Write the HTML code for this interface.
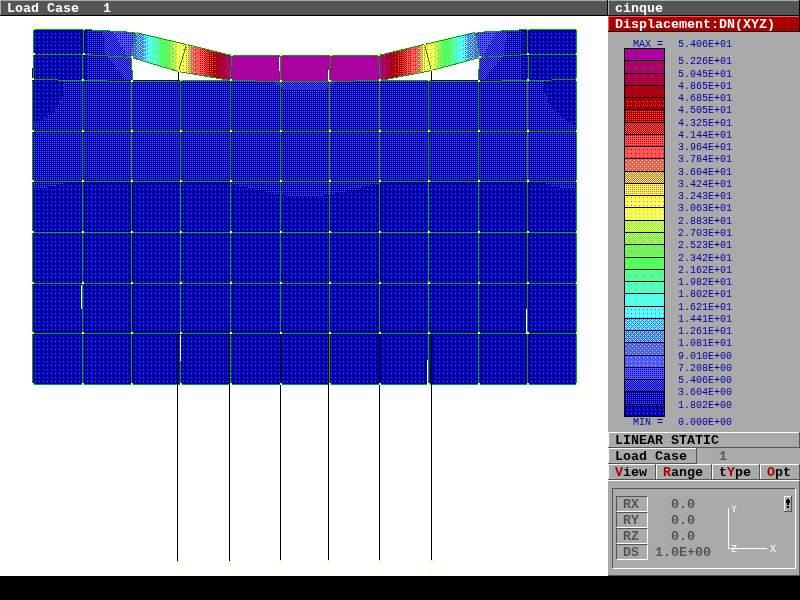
<!DOCTYPE html><html><head><meta charset="utf-8"><style>
*{margin:0;padding:0;box-sizing:border-box}
html,body{width:800px;height:600px;overflow:hidden;background:#fff}
.a{position:absolute}
.t{position:absolute;white-space:pre;font-family:"Liberation Mono",monospace;will-change:transform}
.tb{font-weight:bold;font-size:13.33px;line-height:14px;margin-left:-1px}
.tb i{font-style:normal}
.lg{font-size:10px;line-height:10px;color:#0000aa}
</style></head><body>

<div class="a" style="left:0;top:0;width:608px;height:16px;background:#000"></div>
<div class="a" style="left:0;top:0;width:607px;height:15px;background:#555;border-top:1px solid #aaa;border-left:1px solid #aaa"></div>
<div class="t tb" style="left:8px;top:2px;color:#fff">Load Case   1</div>
<div class="a" style="left:608px;top:0;width:192px;height:16px;background:#000"></div>
<div class="a" style="left:608px;top:0;width:191px;height:15px;background:#555;border-top:1px solid #aaa;border-left:1px solid #aaa"></div>
<div class="t tb" style="left:616px;top:2px;color:#fff">cinque</div>
<div class="a" style="left:608px;top:16px;width:192px;height:16px;background:#000"></div>
<div class="a" style="left:608px;top:16px;width:191px;height:15px;background:#aa0000;border-top:1px solid #ff5555;border-left:1px solid #ff5555"></div>
<div class="t tb" style="left:616px;top:18px;color:#fff">Displacement:DN(XYZ)</div>
<div class="a" style="left:608px;top:32px;width:192px;height:544px;background:#aaa"></div>
<div class="t lg" style="left:633px;top:40px">MAX =</div>
<div class="t lg" style="left:678px;top:40px">5.406E+01</div>
<svg class="a" style="left:624px;top:48px" width="41" height="369" shape-rendering="crispEdges"><defs><pattern id="lp1" patternUnits="userSpaceOnUse" x="0" y="0" width="4" height="4"><rect width="4" height="4" fill="#aa00aa"/><rect x="3" y="1" width="1" height="1" fill="#aa0000"/></pattern><pattern id="lp2" patternUnits="userSpaceOnUse" x="0" y="0" width="4" height="4"><rect width="4" height="4" fill="#aa00aa"/><rect x="2" y="0" width="1" height="1" fill="#aa0000"/><rect x="1" y="1" width="1" height="1" fill="#aa0000"/><rect x="3" y="1" width="1" height="1" fill="#aa0000"/><rect x="0" y="2" width="1" height="1" fill="#aa0000"/><rect x="1" y="3" width="1" height="1" fill="#aa0000"/><rect x="3" y="3" width="1" height="1" fill="#aa0000"/></pattern><pattern id="lp3" patternUnits="userSpaceOnUse" x="0" y="0" width="4" height="4"><rect width="4" height="4" fill="#aa0000"/><rect x="2" y="0" width="1" height="1" fill="#aa00aa"/><rect x="1" y="1" width="1" height="1" fill="#aa00aa"/><rect x="3" y="1" width="1" height="1" fill="#aa00aa"/><rect x="0" y="2" width="1" height="1" fill="#aa00aa"/><rect x="1" y="3" width="1" height="1" fill="#aa00aa"/><rect x="3" y="3" width="1" height="1" fill="#aa00aa"/></pattern><pattern id="lp4" patternUnits="userSpaceOnUse" x="0" y="0" width="4" height="4"><rect width="4" height="4" fill="#aa0000"/><rect x="2" y="0" width="1" height="1" fill="#aa00aa"/><rect x="0" y="2" width="1" height="1" fill="#aa00aa"/></pattern><pattern id="lp5" patternUnits="userSpaceOnUse" x="0" y="0" width="4" height="4"><rect width="4" height="4" fill="#aa0000"/><rect x="3" y="1" width="1" height="1" fill="#ff5555"/></pattern><pattern id="lp6" patternUnits="userSpaceOnUse" x="0" y="0" width="4" height="4"><rect width="4" height="4" fill="#aa0000"/><rect x="0" y="1" width="1" height="1" fill="#ff5555"/><rect x="2" y="1" width="1" height="1" fill="#ff5555"/><rect x="0" y="3" width="1" height="1" fill="#ff5555"/><rect x="2" y="3" width="1" height="1" fill="#ff5555"/></pattern><pattern id="lp7" patternUnits="userSpaceOnUse" x="0" y="0" width="4" height="4"><rect width="4" height="4" fill="#aa0000"/><rect x="0" y="0" width="1" height="1" fill="#ff5555"/><rect x="2" y="0" width="1" height="1" fill="#ff5555"/><rect x="1" y="1" width="1" height="1" fill="#ff5555"/><rect x="3" y="1" width="1" height="1" fill="#ff5555"/><rect x="0" y="2" width="1" height="1" fill="#ff5555"/><rect x="2" y="2" width="1" height="1" fill="#ff5555"/><rect x="1" y="3" width="1" height="1" fill="#ff5555"/><rect x="3" y="3" width="1" height="1" fill="#ff5555"/></pattern><pattern id="lp8" patternUnits="userSpaceOnUse" x="0" y="0" width="4" height="4"><rect width="4" height="4" fill="#ff5555"/><rect x="0" y="1" width="1" height="1" fill="#aa0000"/><rect x="2" y="1" width="1" height="1" fill="#aa0000"/><rect x="0" y="3" width="1" height="1" fill="#aa0000"/><rect x="2" y="3" width="1" height="1" fill="#aa0000"/></pattern><pattern id="lp9" patternUnits="userSpaceOnUse" x="0" y="0" width="4" height="4"><rect width="4" height="4" fill="#ff5555"/><rect x="3" y="1" width="1" height="1" fill="#aa0000"/></pattern><pattern id="lp10" patternUnits="userSpaceOnUse" x="0" y="0" width="4" height="4"><rect width="4" height="4" fill="#ff5555"/><rect x="2" y="0" width="1" height="1" fill="#ffff55"/><rect x="0" y="2" width="1" height="1" fill="#ffff55"/></pattern><pattern id="lp11" patternUnits="userSpaceOnUse" x="0" y="0" width="4" height="4"><rect width="4" height="4" fill="#ff5555"/><rect x="0" y="0" width="1" height="1" fill="#ffff55"/><rect x="2" y="0" width="1" height="1" fill="#ffff55"/><rect x="1" y="1" width="1" height="1" fill="#ffff55"/><rect x="3" y="1" width="1" height="1" fill="#ffff55"/><rect x="0" y="2" width="1" height="1" fill="#ffff55"/><rect x="2" y="2" width="1" height="1" fill="#ffff55"/><rect x="1" y="3" width="1" height="1" fill="#ffff55"/><rect x="3" y="3" width="1" height="1" fill="#ffff55"/></pattern><pattern id="lp12" patternUnits="userSpaceOnUse" x="0" y="0" width="4" height="4"><rect width="4" height="4" fill="#ffff55"/><rect x="0" y="1" width="1" height="1" fill="#ff5555"/><rect x="2" y="1" width="1" height="1" fill="#ff5555"/><rect x="0" y="3" width="1" height="1" fill="#ff5555"/><rect x="2" y="3" width="1" height="1" fill="#ff5555"/></pattern><pattern id="lp13" patternUnits="userSpaceOnUse" x="0" y="0" width="4" height="4"><rect width="4" height="4" fill="#ffff55"/><rect x="3" y="1" width="1" height="1" fill="#ff5555"/></pattern><pattern id="lp14" patternUnits="userSpaceOnUse" x="0" y="0" width="4" height="4"><rect width="4" height="4" fill="#ffff55"/><rect x="3" y="1" width="1" height="1" fill="#55ff55"/></pattern><pattern id="lp15" patternUnits="userSpaceOnUse" x="0" y="0" width="4" height="4"><rect width="4" height="4" fill="#ffff55"/><rect x="2" y="0" width="1" height="1" fill="#55ff55"/><rect x="1" y="1" width="1" height="1" fill="#55ff55"/><rect x="3" y="1" width="1" height="1" fill="#55ff55"/><rect x="0" y="2" width="1" height="1" fill="#55ff55"/><rect x="1" y="3" width="1" height="1" fill="#55ff55"/><rect x="3" y="3" width="1" height="1" fill="#55ff55"/></pattern><pattern id="lp16" patternUnits="userSpaceOnUse" x="0" y="0" width="4" height="4"><rect width="4" height="4" fill="#55ff55"/><rect x="2" y="0" width="1" height="1" fill="#ffff55"/><rect x="1" y="1" width="1" height="1" fill="#ffff55"/><rect x="3" y="1" width="1" height="1" fill="#ffff55"/><rect x="0" y="2" width="1" height="1" fill="#ffff55"/><rect x="1" y="3" width="1" height="1" fill="#ffff55"/><rect x="3" y="3" width="1" height="1" fill="#ffff55"/></pattern><pattern id="lp17" patternUnits="userSpaceOnUse" x="0" y="0" width="4" height="4"><rect width="4" height="4" fill="#55ff55"/><rect x="2" y="0" width="1" height="1" fill="#ffff55"/><rect x="0" y="2" width="1" height="1" fill="#ffff55"/></pattern><pattern id="lp18" patternUnits="userSpaceOnUse" x="0" y="0" width="4" height="4"><rect width="4" height="4" fill="#55ff55"/><rect x="3" y="1" width="1" height="1" fill="#55ffff"/></pattern><pattern id="lp19" patternUnits="userSpaceOnUse" x="0" y="0" width="4" height="4"><rect width="4" height="4" fill="#55ff55"/><rect x="2" y="0" width="1" height="1" fill="#55ffff"/><rect x="1" y="1" width="1" height="1" fill="#55ffff"/><rect x="3" y="1" width="1" height="1" fill="#55ffff"/><rect x="0" y="2" width="1" height="1" fill="#55ffff"/><rect x="1" y="3" width="1" height="1" fill="#55ffff"/><rect x="3" y="3" width="1" height="1" fill="#55ffff"/></pattern><pattern id="lp20" patternUnits="userSpaceOnUse" x="0" y="0" width="4" height="4"><rect width="4" height="4" fill="#55ffff"/><rect x="2" y="0" width="1" height="1" fill="#55ff55"/><rect x="1" y="1" width="1" height="1" fill="#55ff55"/><rect x="3" y="1" width="1" height="1" fill="#55ff55"/><rect x="0" y="2" width="1" height="1" fill="#55ff55"/><rect x="1" y="3" width="1" height="1" fill="#55ff55"/><rect x="3" y="3" width="1" height="1" fill="#55ff55"/></pattern><pattern id="lp21" patternUnits="userSpaceOnUse" x="0" y="0" width="4" height="4"><rect width="4" height="4" fill="#55ffff"/><rect x="2" y="0" width="1" height="1" fill="#55ff55"/><rect x="0" y="2" width="1" height="1" fill="#55ff55"/></pattern><pattern id="lp22" patternUnits="userSpaceOnUse" x="0" y="0" width="4" height="4"><rect width="4" height="4" fill="#55ffff"/><rect x="3" y="1" width="1" height="1" fill="#5555ff"/></pattern><pattern id="lp23" patternUnits="userSpaceOnUse" x="0" y="0" width="4" height="4"><rect width="4" height="4" fill="#55ffff"/><rect x="2" y="0" width="1" height="1" fill="#5555ff"/><rect x="1" y="1" width="1" height="1" fill="#5555ff"/><rect x="3" y="1" width="1" height="1" fill="#5555ff"/><rect x="0" y="2" width="1" height="1" fill="#5555ff"/><rect x="1" y="3" width="1" height="1" fill="#5555ff"/><rect x="3" y="3" width="1" height="1" fill="#5555ff"/></pattern><pattern id="lp24" patternUnits="userSpaceOnUse" x="0" y="0" width="4" height="4"><rect width="4" height="4" fill="#5555ff"/><rect x="2" y="0" width="1" height="1" fill="#55ffff"/><rect x="1" y="1" width="1" height="1" fill="#55ffff"/><rect x="3" y="1" width="1" height="1" fill="#55ffff"/><rect x="0" y="2" width="1" height="1" fill="#55ffff"/><rect x="1" y="3" width="1" height="1" fill="#55ffff"/><rect x="3" y="3" width="1" height="1" fill="#55ffff"/></pattern><pattern id="lp25" patternUnits="userSpaceOnUse" x="0" y="0" width="4" height="4"><rect width="4" height="4" fill="#5555ff"/><rect x="2" y="0" width="1" height="1" fill="#55ffff"/><rect x="0" y="2" width="1" height="1" fill="#55ffff"/></pattern><pattern id="lp26" patternUnits="userSpaceOnUse" x="0" y="0" width="4" height="4"><rect width="4" height="4" fill="#5555ff"/><rect x="3" y="1" width="1" height="1" fill="#55ffff"/></pattern><pattern id="lp27" patternUnits="userSpaceOnUse" x="0" y="0" width="4" height="4"><rect width="4" height="4" fill="#5555ff"/><rect x="0" y="1" width="1" height="1" fill="#0000aa"/><rect x="2" y="1" width="1" height="1" fill="#0000aa"/><rect x="0" y="3" width="1" height="1" fill="#0000aa"/><rect x="2" y="3" width="1" height="1" fill="#0000aa"/></pattern><pattern id="lp28" patternUnits="userSpaceOnUse" x="0" y="0" width="4" height="4"><rect width="4" height="4" fill="#5555ff"/><rect x="0" y="0" width="1" height="1" fill="#0000aa"/><rect x="2" y="0" width="1" height="1" fill="#0000aa"/><rect x="1" y="1" width="1" height="1" fill="#0000aa"/><rect x="3" y="1" width="1" height="1" fill="#0000aa"/><rect x="0" y="2" width="1" height="1" fill="#0000aa"/><rect x="2" y="2" width="1" height="1" fill="#0000aa"/><rect x="1" y="3" width="1" height="1" fill="#0000aa"/><rect x="3" y="3" width="1" height="1" fill="#0000aa"/></pattern><pattern id="lp29" patternUnits="userSpaceOnUse" x="0" y="0" width="4" height="4"><rect width="4" height="4" fill="#0000aa"/><rect x="0" y="1" width="1" height="1" fill="#5555ff"/><rect x="2" y="1" width="1" height="1" fill="#5555ff"/><rect x="0" y="3" width="1" height="1" fill="#5555ff"/><rect x="2" y="3" width="1" height="1" fill="#5555ff"/></pattern><pattern id="lp30" patternUnits="userSpaceOnUse" x="0" y="0" width="4" height="4"><rect width="4" height="4" fill="#0000aa"/><rect x="3" y="1" width="1" height="1" fill="#5555ff"/></pattern></defs><rect width="41" height="369" fill="#000"/><rect x="1" y="1" width="39" height="11" fill="url(#lp1)"/><rect x="1" y="13" width="39" height="12" fill="url(#lp2)"/><rect x="1" y="26" width="39" height="11" fill="url(#lp3)"/><rect x="1" y="38" width="39" height="11" fill="url(#lp4)"/><rect x="1" y="50" width="39" height="11" fill="url(#lp5)"/><rect x="1" y="62" width="39" height="12" fill="url(#lp6)"/><rect x="1" y="75" width="39" height="11" fill="url(#lp7)"/><rect x="1" y="87" width="39" height="11" fill="url(#lp8)"/><rect x="1" y="99" width="39" height="11" fill="url(#lp9)"/><rect x="1" y="111" width="39" height="12" fill="url(#lp10)"/><rect x="1" y="124" width="39" height="11" fill="url(#lp11)"/><rect x="1" y="136" width="39" height="11" fill="url(#lp12)"/><rect x="1" y="148" width="39" height="11" fill="url(#lp13)"/><rect x="1" y="160" width="39" height="12" fill="url(#lp14)"/><rect x="1" y="173" width="39" height="11" fill="url(#lp15)"/><rect x="1" y="185" width="39" height="11" fill="url(#lp16)"/><rect x="1" y="197" width="39" height="12" fill="url(#lp17)"/><rect x="1" y="210" width="39" height="11" fill="url(#lp18)"/><rect x="1" y="222" width="39" height="11" fill="url(#lp19)"/><rect x="1" y="234" width="39" height="11" fill="url(#lp20)"/><rect x="1" y="246" width="39" height="12" fill="url(#lp21)"/><rect x="1" y="259" width="39" height="11" fill="url(#lp22)"/><rect x="1" y="271" width="39" height="11" fill="url(#lp23)"/><rect x="1" y="283" width="39" height="11" fill="url(#lp24)"/><rect x="1" y="295" width="39" height="12" fill="url(#lp25)"/><rect x="1" y="308" width="39" height="11" fill="url(#lp26)"/><rect x="1" y="320" width="39" height="11" fill="url(#lp27)"/><rect x="1" y="332" width="39" height="11" fill="url(#lp28)"/><rect x="1" y="344" width="39" height="12" fill="url(#lp29)"/><rect x="1" y="357" width="39" height="11" fill="url(#lp30)"/></svg>
<div class="t lg" style="left:678px;top:57px">5.226E+01</div>
<div class="t lg" style="left:678px;top:70px">5.045E+01</div>
<div class="t lg" style="left:678px;top:82px">4.865E+01</div>
<div class="t lg" style="left:678px;top:94px">4.685E+01</div>
<div class="t lg" style="left:678px;top:106px">4.505E+01</div>
<div class="t lg" style="left:678px;top:119px">4.325E+01</div>
<div class="t lg" style="left:678px;top:131px">4.144E+01</div>
<div class="t lg" style="left:678px;top:143px">3.964E+01</div>
<div class="t lg" style="left:678px;top:155px">3.784E+01</div>
<div class="t lg" style="left:678px;top:168px">3.604E+01</div>
<div class="t lg" style="left:678px;top:180px">3.424E+01</div>
<div class="t lg" style="left:678px;top:192px">3.243E+01</div>
<div class="t lg" style="left:678px;top:204px">3.063E+01</div>
<div class="t lg" style="left:678px;top:217px">2.883E+01</div>
<div class="t lg" style="left:678px;top:229px">2.703E+01</div>
<div class="t lg" style="left:678px;top:241px">2.523E+01</div>
<div class="t lg" style="left:678px;top:254px">2.342E+01</div>
<div class="t lg" style="left:678px;top:266px">2.162E+01</div>
<div class="t lg" style="left:678px;top:278px">1.982E+01</div>
<div class="t lg" style="left:678px;top:290px">1.802E+01</div>
<div class="t lg" style="left:678px;top:303px">1.621E+01</div>
<div class="t lg" style="left:678px;top:315px">1.441E+01</div>
<div class="t lg" style="left:678px;top:327px">1.261E+01</div>
<div class="t lg" style="left:678px;top:339px">1.081E+01</div>
<div class="t lg" style="left:678px;top:352px">9.010E+00</div>
<div class="t lg" style="left:678px;top:364px">7.208E+00</div>
<div class="t lg" style="left:678px;top:376px">5.406E+00</div>
<div class="t lg" style="left:678px;top:388px">3.604E+00</div>
<div class="t lg" style="left:678px;top:401px">1.802E+00</div>
<div class="t lg" style="left:633px;top:418px">MIN =</div>
<div class="t lg" style="left:678px;top:418px">0.000E+00</div>
<div class="a" style="left:608px;top:432px;width:192px;height:16px;background:#555"></div>
<div class="a" style="left:608px;top:432px;width:191px;height:15px;background:#fff"></div>
<div class="a" style="left:609px;top:433px;width:190px;height:14px;background:#aaa"></div>
<div class="t tb" style="left:616px;top:434px;color:#000">LINEAR STATIC</div>
<div class="a" style="left:608px;top:448px;width:89px;height:16px;background:#555"></div>
<div class="a" style="left:608px;top:448px;width:88px;height:15px;background:#fff"></div>
<div class="a" style="left:609px;top:449px;width:87px;height:14px;background:#aaa"></div>
<div class="a" style="left:696px;top:448px;width:1px;height:16px;background:#555"></div>
<div class="t tb" style="left:616px;top:450px;color:#000">Load Case</div>
<div class="a" style="left:697px;top:448px;width:103px;height:16px;background:#aaa"></div>
<div class="t tb" style="left:720px;top:450px;color:#555">1</div>
<div class="a" style="left:608px;top:464px;width:48px;height:16px;background:#555"></div>
<div class="a" style="left:608px;top:464px;width:47px;height:15px;background:#fff"></div>
<div class="a" style="left:609px;top:465px;width:46px;height:14px;background:#aaa"></div>
<div class="a" style="left:656px;top:464px;width:56px;height:16px;background:#555"></div>
<div class="a" style="left:656px;top:464px;width:55px;height:15px;background:#fff"></div>
<div class="a" style="left:657px;top:465px;width:54px;height:14px;background:#aaa"></div>
<div class="a" style="left:712px;top:464px;width:48px;height:16px;background:#555"></div>
<div class="a" style="left:712px;top:464px;width:47px;height:15px;background:#fff"></div>
<div class="a" style="left:713px;top:465px;width:46px;height:14px;background:#aaa"></div>
<div class="a" style="left:760px;top:464px;width:40px;height:16px;background:#555"></div>
<div class="a" style="left:760px;top:464px;width:39px;height:15px;background:#fff"></div>
<div class="a" style="left:761px;top:465px;width:38px;height:14px;background:#aaa"></div>
<div class="t tb" style="left:616px;top:466px;color:#000"><span style="color:#aa0000">V</span>iew</div>
<div class="t tb" style="left:664px;top:466px;color:#000"><span style="color:#aa0000">R</span>ange</div>
<div class="t tb" style="left:720px;top:466px;color:#000">t<span style="color:#aa0000">Y</span>pe</div>
<div class="t tb" style="left:768px;top:466px;color:#000"><span style="color:#aa0000">O</span>pt</div>
<div class="a" style="left:608px;top:480px;width:192px;height:96px;background:#aaa;border-top:1px solid #fff;border-right:1px solid #555;border-bottom:1px solid #555"></div>
<div class="a" style="left:612px;top:488px;width:184px;height:81px;border-top:1px solid #555;border-left:1px solid #555;border-bottom:1px solid #fff;border-right:1px solid #fff"></div>
<div class="a" style="left:616px;top:496px;width:32px;height:16px;border-top:1px solid #555;border-left:1px solid #555;border-bottom:1px solid #fff;border-right:1px solid #fff"></div>
<div class="t tb" style="left:624px;top:498px;color:#555">RX</div>
<div class="t tb" style="left:672px;top:498px;color:#555">0.0</div>
<div class="a" style="left:616px;top:512px;width:32px;height:16px;border-top:1px solid #555;border-left:1px solid #555;border-bottom:1px solid #fff;border-right:1px solid #fff"></div>
<div class="t tb" style="left:624px;top:514px;color:#555">RY</div>
<div class="t tb" style="left:672px;top:514px;color:#555">0.0</div>
<div class="a" style="left:616px;top:528px;width:32px;height:16px;border-top:1px solid #555;border-left:1px solid #555;border-bottom:1px solid #fff;border-right:1px solid #fff"></div>
<div class="t tb" style="left:624px;top:530px;color:#555">RZ</div>
<div class="t tb" style="left:672px;top:530px;color:#555">0.0</div>
<div class="a" style="left:616px;top:544px;width:32px;height:16px;border-top:1px solid #555;border-left:1px solid #555;border-bottom:1px solid #fff;border-right:1px solid #fff"></div>
<div class="t tb" style="left:624px;top:546px;color:#555">DS</div>
<div class="t tb" style="left:656px;top:546px;color:#555">1.0E+00</div>
<svg class="a" style="left:700px;top:490px" width="100" height="80"><g stroke="#fff" fill="none" stroke-width="1"><path d="M28.5 18V58.5H67"/></g></svg>
<div class="t lg" style="left:731px;top:505px;color:#fff">Y</div>
<div class="t lg" style="left:731px;top:545px;color:#fff">Z</div>
<div class="t lg" style="left:770px;top:545px;color:#fff">X</div>
<div class="a" style="left:784px;top:496px;width:8px;height:16px;background:#555"></div>
<div class="a" style="left:784px;top:496px;width:7px;height:15px;background:#fff"></div>
<div class="a" style="left:785px;top:497px;width:6px;height:14px;background:#aaa"></div>
<svg class="a" style="left:784px;top:496px" width="8" height="16" shape-rendering="crispEdges"><g fill="#000"><rect x="3" y="3" width="2" height="1"/><rect x="2" y="4" width="4" height="3"/><rect x="3" y="7" width="2" height="2"/><rect x="3" y="10" width="2" height="2"/></g></svg>
<div class="a" style="left:0;top:576px;width:800px;height:24px;background:#000"></div>
<svg class="a" style="left:0;top:0" width="608" height="575" shape-rendering="crispEdges"><defs><pattern id="mp1" patternUnits="userSpaceOnUse" x="0" y="0" width="4" height="4"><rect width="4" height="4" fill="#aa00aa"/><rect x="3" y="1" width="1" height="1" fill="#aa0000"/></pattern><pattern id="mp2" patternUnits="userSpaceOnUse" x="0" y="0" width="4" height="4"><rect width="4" height="4" fill="#aa00aa"/><rect x="2" y="0" width="1" height="1" fill="#aa0000"/><rect x="1" y="1" width="1" height="1" fill="#aa0000"/><rect x="3" y="1" width="1" height="1" fill="#aa0000"/><rect x="0" y="2" width="1" height="1" fill="#aa0000"/><rect x="1" y="3" width="1" height="1" fill="#aa0000"/><rect x="3" y="3" width="1" height="1" fill="#aa0000"/></pattern><pattern id="mp3" patternUnits="userSpaceOnUse" x="0" y="0" width="4" height="4"><rect width="4" height="4" fill="#aa0000"/><rect x="2" y="0" width="1" height="1" fill="#aa00aa"/><rect x="1" y="1" width="1" height="1" fill="#aa00aa"/><rect x="3" y="1" width="1" height="1" fill="#aa00aa"/><rect x="0" y="2" width="1" height="1" fill="#aa00aa"/><rect x="1" y="3" width="1" height="1" fill="#aa00aa"/><rect x="3" y="3" width="1" height="1" fill="#aa00aa"/></pattern><pattern id="mp4" patternUnits="userSpaceOnUse" x="0" y="0" width="4" height="4"><rect width="4" height="4" fill="#aa0000"/><rect x="2" y="0" width="1" height="1" fill="#aa00aa"/><rect x="0" y="2" width="1" height="1" fill="#aa00aa"/></pattern><pattern id="mp5" patternUnits="userSpaceOnUse" x="0" y="0" width="4" height="4"><rect width="4" height="4" fill="#aa0000"/><rect x="3" y="1" width="1" height="1" fill="#ff5555"/></pattern><pattern id="mp6" patternUnits="userSpaceOnUse" x="0" y="0" width="4" height="4"><rect width="4" height="4" fill="#aa0000"/><rect x="0" y="1" width="1" height="1" fill="#ff5555"/><rect x="2" y="1" width="1" height="1" fill="#ff5555"/><rect x="0" y="3" width="1" height="1" fill="#ff5555"/><rect x="2" y="3" width="1" height="1" fill="#ff5555"/></pattern><pattern id="mp7" patternUnits="userSpaceOnUse" x="0" y="0" width="4" height="4"><rect width="4" height="4" fill="#aa0000"/><rect x="0" y="0" width="1" height="1" fill="#ff5555"/><rect x="2" y="0" width="1" height="1" fill="#ff5555"/><rect x="1" y="1" width="1" height="1" fill="#ff5555"/><rect x="3" y="1" width="1" height="1" fill="#ff5555"/><rect x="0" y="2" width="1" height="1" fill="#ff5555"/><rect x="2" y="2" width="1" height="1" fill="#ff5555"/><rect x="1" y="3" width="1" height="1" fill="#ff5555"/><rect x="3" y="3" width="1" height="1" fill="#ff5555"/></pattern><pattern id="mp8" patternUnits="userSpaceOnUse" x="0" y="0" width="4" height="4"><rect width="4" height="4" fill="#ff5555"/><rect x="0" y="1" width="1" height="1" fill="#aa0000"/><rect x="2" y="1" width="1" height="1" fill="#aa0000"/><rect x="0" y="3" width="1" height="1" fill="#aa0000"/><rect x="2" y="3" width="1" height="1" fill="#aa0000"/></pattern><pattern id="mp9" patternUnits="userSpaceOnUse" x="0" y="0" width="4" height="4"><rect width="4" height="4" fill="#ff5555"/><rect x="3" y="1" width="1" height="1" fill="#aa0000"/></pattern><pattern id="mp10" patternUnits="userSpaceOnUse" x="0" y="0" width="4" height="4"><rect width="4" height="4" fill="#ff5555"/><rect x="2" y="0" width="1" height="1" fill="#ffff55"/><rect x="0" y="2" width="1" height="1" fill="#ffff55"/></pattern><pattern id="mp11" patternUnits="userSpaceOnUse" x="0" y="0" width="4" height="4"><rect width="4" height="4" fill="#ff5555"/><rect x="0" y="0" width="1" height="1" fill="#ffff55"/><rect x="2" y="0" width="1" height="1" fill="#ffff55"/><rect x="1" y="1" width="1" height="1" fill="#ffff55"/><rect x="3" y="1" width="1" height="1" fill="#ffff55"/><rect x="0" y="2" width="1" height="1" fill="#ffff55"/><rect x="2" y="2" width="1" height="1" fill="#ffff55"/><rect x="1" y="3" width="1" height="1" fill="#ffff55"/><rect x="3" y="3" width="1" height="1" fill="#ffff55"/></pattern><pattern id="mp12" patternUnits="userSpaceOnUse" x="0" y="0" width="4" height="4"><rect width="4" height="4" fill="#ffff55"/><rect x="0" y="1" width="1" height="1" fill="#ff5555"/><rect x="2" y="1" width="1" height="1" fill="#ff5555"/><rect x="0" y="3" width="1" height="1" fill="#ff5555"/><rect x="2" y="3" width="1" height="1" fill="#ff5555"/></pattern><pattern id="mp13" patternUnits="userSpaceOnUse" x="0" y="0" width="4" height="4"><rect width="4" height="4" fill="#ffff55"/><rect x="3" y="1" width="1" height="1" fill="#ff5555"/></pattern><pattern id="mp14" patternUnits="userSpaceOnUse" x="0" y="0" width="4" height="4"><rect width="4" height="4" fill="#ffff55"/><rect x="3" y="1" width="1" height="1" fill="#55ff55"/></pattern><pattern id="mp15" patternUnits="userSpaceOnUse" x="0" y="0" width="4" height="4"><rect width="4" height="4" fill="#ffff55"/><rect x="2" y="0" width="1" height="1" fill="#55ff55"/><rect x="1" y="1" width="1" height="1" fill="#55ff55"/><rect x="3" y="1" width="1" height="1" fill="#55ff55"/><rect x="0" y="2" width="1" height="1" fill="#55ff55"/><rect x="1" y="3" width="1" height="1" fill="#55ff55"/><rect x="3" y="3" width="1" height="1" fill="#55ff55"/></pattern><pattern id="mp16" patternUnits="userSpaceOnUse" x="0" y="0" width="4" height="4"><rect width="4" height="4" fill="#55ff55"/><rect x="2" y="0" width="1" height="1" fill="#ffff55"/><rect x="1" y="1" width="1" height="1" fill="#ffff55"/><rect x="3" y="1" width="1" height="1" fill="#ffff55"/><rect x="0" y="2" width="1" height="1" fill="#ffff55"/><rect x="1" y="3" width="1" height="1" fill="#ffff55"/><rect x="3" y="3" width="1" height="1" fill="#ffff55"/></pattern><pattern id="mp17" patternUnits="userSpaceOnUse" x="0" y="0" width="4" height="4"><rect width="4" height="4" fill="#55ff55"/><rect x="2" y="0" width="1" height="1" fill="#ffff55"/><rect x="0" y="2" width="1" height="1" fill="#ffff55"/></pattern><pattern id="mp18" patternUnits="userSpaceOnUse" x="0" y="0" width="4" height="4"><rect width="4" height="4" fill="#55ff55"/><rect x="3" y="1" width="1" height="1" fill="#55ffff"/></pattern><pattern id="mp19" patternUnits="userSpaceOnUse" x="0" y="0" width="4" height="4"><rect width="4" height="4" fill="#55ff55"/><rect x="2" y="0" width="1" height="1" fill="#55ffff"/><rect x="1" y="1" width="1" height="1" fill="#55ffff"/><rect x="3" y="1" width="1" height="1" fill="#55ffff"/><rect x="0" y="2" width="1" height="1" fill="#55ffff"/><rect x="1" y="3" width="1" height="1" fill="#55ffff"/><rect x="3" y="3" width="1" height="1" fill="#55ffff"/></pattern><pattern id="mp20" patternUnits="userSpaceOnUse" x="0" y="0" width="4" height="4"><rect width="4" height="4" fill="#55ffff"/><rect x="2" y="0" width="1" height="1" fill="#55ff55"/><rect x="1" y="1" width="1" height="1" fill="#55ff55"/><rect x="3" y="1" width="1" height="1" fill="#55ff55"/><rect x="0" y="2" width="1" height="1" fill="#55ff55"/><rect x="1" y="3" width="1" height="1" fill="#55ff55"/><rect x="3" y="3" width="1" height="1" fill="#55ff55"/></pattern><pattern id="mp21" patternUnits="userSpaceOnUse" x="0" y="0" width="4" height="4"><rect width="4" height="4" fill="#55ffff"/><rect x="2" y="0" width="1" height="1" fill="#55ff55"/><rect x="0" y="2" width="1" height="1" fill="#55ff55"/></pattern><pattern id="mp22" patternUnits="userSpaceOnUse" x="0" y="0" width="4" height="4"><rect width="4" height="4" fill="#55ffff"/><rect x="3" y="1" width="1" height="1" fill="#5555ff"/></pattern><pattern id="mp23" patternUnits="userSpaceOnUse" x="0" y="0" width="4" height="4"><rect width="4" height="4" fill="#55ffff"/><rect x="2" y="0" width="1" height="1" fill="#5555ff"/><rect x="1" y="1" width="1" height="1" fill="#5555ff"/><rect x="3" y="1" width="1" height="1" fill="#5555ff"/><rect x="0" y="2" width="1" height="1" fill="#5555ff"/><rect x="1" y="3" width="1" height="1" fill="#5555ff"/><rect x="3" y="3" width="1" height="1" fill="#5555ff"/></pattern><pattern id="mp24" patternUnits="userSpaceOnUse" x="0" y="0" width="4" height="4"><rect width="4" height="4" fill="#5555ff"/><rect x="2" y="0" width="1" height="1" fill="#55ffff"/><rect x="1" y="1" width="1" height="1" fill="#55ffff"/><rect x="3" y="1" width="1" height="1" fill="#55ffff"/><rect x="0" y="2" width="1" height="1" fill="#55ffff"/><rect x="1" y="3" width="1" height="1" fill="#55ffff"/><rect x="3" y="3" width="1" height="1" fill="#55ffff"/></pattern><pattern id="mp25" patternUnits="userSpaceOnUse" x="0" y="0" width="4" height="4"><rect width="4" height="4" fill="#5555ff"/><rect x="2" y="0" width="1" height="1" fill="#55ffff"/><rect x="0" y="2" width="1" height="1" fill="#55ffff"/></pattern><pattern id="mp26" patternUnits="userSpaceOnUse" x="0" y="0" width="4" height="4"><rect width="4" height="4" fill="#5555ff"/><rect x="3" y="1" width="1" height="1" fill="#55ffff"/></pattern><pattern id="mp27" patternUnits="userSpaceOnUse" x="0" y="0" width="4" height="4"><rect width="4" height="4" fill="#5555ff"/><rect x="0" y="1" width="1" height="1" fill="#0000aa"/><rect x="2" y="1" width="1" height="1" fill="#0000aa"/><rect x="0" y="3" width="1" height="1" fill="#0000aa"/><rect x="2" y="3" width="1" height="1" fill="#0000aa"/></pattern><pattern id="mp28" patternUnits="userSpaceOnUse" x="0" y="0" width="4" height="4"><rect width="4" height="4" fill="#5555ff"/><rect x="0" y="0" width="1" height="1" fill="#0000aa"/><rect x="2" y="0" width="1" height="1" fill="#0000aa"/><rect x="1" y="1" width="1" height="1" fill="#0000aa"/><rect x="3" y="1" width="1" height="1" fill="#0000aa"/><rect x="0" y="2" width="1" height="1" fill="#0000aa"/><rect x="2" y="2" width="1" height="1" fill="#0000aa"/><rect x="1" y="3" width="1" height="1" fill="#0000aa"/><rect x="3" y="3" width="1" height="1" fill="#0000aa"/></pattern><pattern id="mp29" patternUnits="userSpaceOnUse" x="0" y="0" width="4" height="4"><rect width="4" height="4" fill="#0000aa"/><rect x="0" y="1" width="1" height="1" fill="#5555ff"/><rect x="2" y="1" width="1" height="1" fill="#5555ff"/><rect x="0" y="3" width="1" height="1" fill="#5555ff"/><rect x="2" y="3" width="1" height="1" fill="#5555ff"/></pattern><pattern id="mp30" patternUnits="userSpaceOnUse" x="0" y="0" width="4" height="4"><rect width="4" height="4" fill="#0000aa"/><rect x="3" y="1" width="1" height="1" fill="#5555ff"/></pattern><clipPath id="cL"><polygon points="135,32 186,44 231,55 231,81 178,71 131,57"/></clipPath><clipPath id="cR"><polygon points="475,32 424,44 379,55 379,81 431,71 479,57"/></clipPath></defs><polygon points="32,79 82,80 131,81 230,80 280,81 329,81 380,80 478,81 527,80 576,79 576,385 32,385" fill="url(#mp30)" /><polygon points="64,80 543,80 544,92 550,105 560,116 569,122 576,128 576,182 385,182 330,195 305,197 280,195 225,182 32,182 32,123 42,120 57,109 64,92" fill="url(#mp29)" /><polygon points="32,182 70,182 45,188 32,189" fill="url(#mp29)" /><polygon points="540,182 576,182 576,189 565,189" fill="url(#mp29)" /><polygon points="272,81 337,81 326,89 284,89" fill="url(#mp28)" /><polygon points="33,29 88,29 88,55 88,81 32,81 33,79" fill="url(#mp30)" /><polygon points="522,29 576,29 576,79 576,81 522,81" fill="url(#mp30)" /><polygon points="88,30 135,33 131,57 88,54" fill="url(#mp29)" /><polygon points="103,31 135,33 131,57 106,57" fill="url(#mp28)" /><polygon points="114,32 135,33 131,57 127,57" fill="url(#mp27)" /><polygon points="88,54 131,57 132,81 88,81" fill="url(#mp29)" /><polygon points="108,57 131,57 132,81 126,79" fill="url(#mp28)" /><polygon points="475,33 522,30 522,54 479,57" fill="url(#mp29)" /><polygon points="475,33 507,31 504,57 479,57" fill="url(#mp28)" /><polygon points="475,33 496,32 483,57 479,57" fill="url(#mp27)" /><polygon points="479,57 522,54 522,81 478,81" fill="url(#mp29)" /><polygon points="479,57 502,57 484,79 478,81" fill="url(#mp28)" /><g clip-path="url(#cL)"><rect x="131" y="30" width="1" height="52" fill="url(#mp26)"/><rect x="132" y="30" width="1" height="52" fill="url(#mp26)"/><rect x="133" y="30" width="1" height="52" fill="url(#mp25)"/><rect x="134" y="30" width="1" height="52" fill="url(#mp25)"/><rect x="135" y="30" width="1" height="52" fill="url(#mp25)"/><rect x="136" y="30" width="1" height="52" fill="url(#mp25)"/><rect x="137" y="30" width="1" height="52" fill="url(#mp24)"/><rect x="138" y="30" width="1" height="52" fill="url(#mp24)"/><rect x="139" y="30" width="1" height="52" fill="url(#mp24)"/><rect x="140" y="30" width="1" height="52" fill="url(#mp24)"/><rect x="141" y="30" width="1" height="52" fill="url(#mp24)"/><rect x="142" y="30" width="1" height="52" fill="url(#mp24)"/><rect x="143" y="30" width="1" height="52" fill="url(#mp23)"/><rect x="144" y="30" width="1" height="52" fill="url(#mp23)"/><rect x="145" y="30" width="1" height="52" fill="url(#mp23)"/><rect x="146" y="30" width="1" height="52" fill="url(#mp22)"/><rect x="147" y="30" width="1" height="52" fill="url(#mp22)"/><rect x="148" y="30" width="1" height="52" fill="url(#mp22)"/><rect x="149" y="30" width="1" height="52" fill="url(#mp22)"/><rect x="150" y="30" width="1" height="52" fill="url(#mp21)"/><rect x="151" y="30" width="1" height="52" fill="url(#mp21)"/><rect x="152" y="30" width="1" height="52" fill="url(#mp21)"/><rect x="153" y="30" width="1" height="52" fill="url(#mp20)"/><rect x="154" y="30" width="1" height="52" fill="url(#mp20)"/><rect x="155" y="30" width="1" height="52" fill="url(#mp20)"/><rect x="156" y="30" width="1" height="52" fill="url(#mp20)"/><rect x="157" y="30" width="1" height="52" fill="url(#mp19)"/><rect x="158" y="30" width="1" height="52" fill="url(#mp19)"/><rect x="159" y="30" width="1" height="52" fill="url(#mp19)"/><rect x="160" y="30" width="1" height="52" fill="url(#mp19)"/><rect x="161" y="30" width="1" height="52" fill="url(#mp18)"/><rect x="162" y="30" width="1" height="52" fill="url(#mp18)"/><rect x="163" y="30" width="1" height="52" fill="url(#mp18)"/><rect x="164" y="30" width="1" height="52" fill="url(#mp18)"/><rect x="165" y="30" width="1" height="52" fill="url(#mp18)"/><rect x="166" y="30" width="1" height="52" fill="url(#mp18)"/><rect x="167" y="30" width="1" height="52" fill="url(#mp17)"/><rect x="168" y="30" width="1" height="52" fill="url(#mp17)"/><rect x="169" y="30" width="1" height="52" fill="url(#mp17)"/><rect x="170" y="30" width="1" height="52" fill="url(#mp16)"/><rect x="171" y="30" width="1" height="52" fill="url(#mp16)"/><rect x="172" y="30" width="1" height="52" fill="url(#mp16)"/><rect x="173" y="30" width="1" height="52" fill="url(#mp16)"/><rect x="174" y="30" width="1" height="52" fill="url(#mp15)"/><rect x="175" y="30" width="1" height="52" fill="url(#mp15)"/><rect x="176" y="30" width="1" height="52" fill="url(#mp15)"/><rect x="177" y="30" width="1" height="52" fill="url(#mp14)"/><rect x="178" y="30" width="1" height="52" fill="url(#mp14)"/><rect x="179" y="30" width="1" height="52" fill="url(#mp14)"/><rect x="180" y="30" width="1" height="52" fill="url(#mp14)"/><rect x="181" y="30" width="1" height="52" fill="url(#mp14)"/><rect x="182" y="30" width="1" height="52" fill="url(#mp13)"/><rect x="183" y="30" width="1" height="52" fill="url(#mp13)"/><rect x="184" y="30" width="1" height="52" fill="url(#mp13)"/><rect x="185" y="30" width="1" height="52" fill="url(#mp12)"/><rect x="186" y="30" width="1" height="52" fill="url(#mp12)"/><rect x="187" y="30" width="1" height="52" fill="url(#mp12)"/><rect x="188" y="30" width="1" height="52" fill="url(#mp11)"/><rect x="189" y="30" width="1" height="52" fill="url(#mp11)"/><rect x="190" y="30" width="1" height="52" fill="url(#mp11)"/><rect x="191" y="30" width="1" height="52" fill="url(#mp10)"/><rect x="192" y="30" width="1" height="52" fill="url(#mp10)"/><rect x="193" y="30" width="1" height="52" fill="url(#mp10)"/><rect x="194" y="30" width="1" height="52" fill="url(#mp10)"/><rect x="195" y="30" width="1" height="52" fill="url(#mp9)"/><rect x="196" y="30" width="1" height="52" fill="url(#mp9)"/><rect x="197" y="30" width="1" height="52" fill="url(#mp9)"/><rect x="198" y="30" width="1" height="52" fill="url(#mp9)"/><rect x="199" y="30" width="1" height="52" fill="url(#mp8)"/><rect x="200" y="30" width="1" height="52" fill="url(#mp8)"/><rect x="201" y="30" width="1" height="52" fill="url(#mp8)"/><rect x="202" y="30" width="1" height="52" fill="url(#mp8)"/><rect x="203" y="30" width="1" height="52" fill="url(#mp8)"/><rect x="204" y="30" width="1" height="52" fill="url(#mp8)"/><rect x="205" y="30" width="1" height="52" fill="url(#mp7)"/><rect x="206" y="30" width="1" height="52" fill="url(#mp7)"/><rect x="207" y="30" width="1" height="52" fill="url(#mp7)"/><rect x="208" y="30" width="1" height="52" fill="url(#mp6)"/><rect x="209" y="30" width="1" height="52" fill="url(#mp6)"/><rect x="210" y="30" width="1" height="52" fill="url(#mp6)"/><rect x="211" y="30" width="1" height="52" fill="url(#mp6)"/><rect x="212" y="30" width="1" height="52" fill="url(#mp6)"/><rect x="213" y="30" width="1" height="52" fill="url(#mp5)"/><rect x="214" y="30" width="1" height="52" fill="url(#mp5)"/><rect x="215" y="30" width="1" height="52" fill="url(#mp5)"/><rect x="216" y="30" width="1" height="52" fill="url(#mp4)"/><rect x="217" y="30" width="1" height="52" fill="url(#mp4)"/><rect x="218" y="30" width="1" height="52" fill="url(#mp4)"/><rect x="219" y="30" width="1" height="52" fill="url(#mp4)"/><rect x="220" y="30" width="1" height="52" fill="url(#mp3)"/><rect x="221" y="30" width="1" height="52" fill="url(#mp3)"/><rect x="222" y="30" width="1" height="52" fill="url(#mp3)"/><rect x="223" y="30" width="1" height="52" fill="url(#mp3)"/><rect x="224" y="30" width="1" height="52" fill="url(#mp3)"/><rect x="225" y="30" width="1" height="52" fill="url(#mp2)"/><rect x="226" y="30" width="1" height="52" fill="url(#mp2)"/><rect x="227" y="30" width="1" height="52" fill="url(#mp2)"/><rect x="228" y="30" width="1" height="52" fill="url(#mp2)"/><rect x="229" y="30" width="1" height="52" fill="url(#mp2)"/><rect x="230" y="30" width="1" height="52" fill="url(#mp1)"/><rect x="231" y="30" width="1" height="52" fill="url(#mp1)"/></g><g clip-path="url(#cR)"><rect x="479" y="30" width="1" height="52" fill="url(#mp26)"/><rect x="478" y="30" width="1" height="52" fill="url(#mp26)"/><rect x="477" y="30" width="1" height="52" fill="url(#mp25)"/><rect x="476" y="30" width="1" height="52" fill="url(#mp25)"/><rect x="475" y="30" width="1" height="52" fill="url(#mp25)"/><rect x="474" y="30" width="1" height="52" fill="url(#mp25)"/><rect x="473" y="30" width="1" height="52" fill="url(#mp24)"/><rect x="472" y="30" width="1" height="52" fill="url(#mp24)"/><rect x="471" y="30" width="1" height="52" fill="url(#mp24)"/><rect x="470" y="30" width="1" height="52" fill="url(#mp24)"/><rect x="469" y="30" width="1" height="52" fill="url(#mp24)"/><rect x="468" y="30" width="1" height="52" fill="url(#mp24)"/><rect x="467" y="30" width="1" height="52" fill="url(#mp23)"/><rect x="466" y="30" width="1" height="52" fill="url(#mp23)"/><rect x="465" y="30" width="1" height="52" fill="url(#mp23)"/><rect x="464" y="30" width="1" height="52" fill="url(#mp22)"/><rect x="463" y="30" width="1" height="52" fill="url(#mp22)"/><rect x="462" y="30" width="1" height="52" fill="url(#mp22)"/><rect x="461" y="30" width="1" height="52" fill="url(#mp22)"/><rect x="460" y="30" width="1" height="52" fill="url(#mp21)"/><rect x="459" y="30" width="1" height="52" fill="url(#mp21)"/><rect x="458" y="30" width="1" height="52" fill="url(#mp21)"/><rect x="457" y="30" width="1" height="52" fill="url(#mp20)"/><rect x="456" y="30" width="1" height="52" fill="url(#mp20)"/><rect x="455" y="30" width="1" height="52" fill="url(#mp20)"/><rect x="454" y="30" width="1" height="52" fill="url(#mp20)"/><rect x="453" y="30" width="1" height="52" fill="url(#mp19)"/><rect x="452" y="30" width="1" height="52" fill="url(#mp19)"/><rect x="451" y="30" width="1" height="52" fill="url(#mp19)"/><rect x="450" y="30" width="1" height="52" fill="url(#mp19)"/><rect x="449" y="30" width="1" height="52" fill="url(#mp18)"/><rect x="448" y="30" width="1" height="52" fill="url(#mp18)"/><rect x="447" y="30" width="1" height="52" fill="url(#mp18)"/><rect x="446" y="30" width="1" height="52" fill="url(#mp18)"/><rect x="445" y="30" width="1" height="52" fill="url(#mp18)"/><rect x="444" y="30" width="1" height="52" fill="url(#mp18)"/><rect x="443" y="30" width="1" height="52" fill="url(#mp17)"/><rect x="442" y="30" width="1" height="52" fill="url(#mp17)"/><rect x="441" y="30" width="1" height="52" fill="url(#mp17)"/><rect x="440" y="30" width="1" height="52" fill="url(#mp16)"/><rect x="439" y="30" width="1" height="52" fill="url(#mp16)"/><rect x="438" y="30" width="1" height="52" fill="url(#mp16)"/><rect x="437" y="30" width="1" height="52" fill="url(#mp16)"/><rect x="436" y="30" width="1" height="52" fill="url(#mp15)"/><rect x="435" y="30" width="1" height="52" fill="url(#mp15)"/><rect x="434" y="30" width="1" height="52" fill="url(#mp15)"/><rect x="433" y="30" width="1" height="52" fill="url(#mp14)"/><rect x="432" y="30" width="1" height="52" fill="url(#mp14)"/><rect x="431" y="30" width="1" height="52" fill="url(#mp14)"/><rect x="430" y="30" width="1" height="52" fill="url(#mp14)"/><rect x="429" y="30" width="1" height="52" fill="url(#mp14)"/><rect x="428" y="30" width="1" height="52" fill="url(#mp13)"/><rect x="427" y="30" width="1" height="52" fill="url(#mp13)"/><rect x="426" y="30" width="1" height="52" fill="url(#mp13)"/><rect x="425" y="30" width="1" height="52" fill="url(#mp12)"/><rect x="424" y="30" width="1" height="52" fill="url(#mp12)"/><rect x="423" y="30" width="1" height="52" fill="url(#mp12)"/><rect x="422" y="30" width="1" height="52" fill="url(#mp11)"/><rect x="421" y="30" width="1" height="52" fill="url(#mp11)"/><rect x="420" y="30" width="1" height="52" fill="url(#mp11)"/><rect x="419" y="30" width="1" height="52" fill="url(#mp10)"/><rect x="418" y="30" width="1" height="52" fill="url(#mp10)"/><rect x="417" y="30" width="1" height="52" fill="url(#mp10)"/><rect x="416" y="30" width="1" height="52" fill="url(#mp10)"/><rect x="415" y="30" width="1" height="52" fill="url(#mp9)"/><rect x="414" y="30" width="1" height="52" fill="url(#mp9)"/><rect x="413" y="30" width="1" height="52" fill="url(#mp9)"/><rect x="412" y="30" width="1" height="52" fill="url(#mp9)"/><rect x="411" y="30" width="1" height="52" fill="url(#mp8)"/><rect x="410" y="30" width="1" height="52" fill="url(#mp8)"/><rect x="409" y="30" width="1" height="52" fill="url(#mp8)"/><rect x="408" y="30" width="1" height="52" fill="url(#mp8)"/><rect x="407" y="30" width="1" height="52" fill="url(#mp8)"/><rect x="406" y="30" width="1" height="52" fill="url(#mp8)"/><rect x="405" y="30" width="1" height="52" fill="url(#mp7)"/><rect x="404" y="30" width="1" height="52" fill="url(#mp7)"/><rect x="403" y="30" width="1" height="52" fill="url(#mp7)"/><rect x="402" y="30" width="1" height="52" fill="url(#mp6)"/><rect x="401" y="30" width="1" height="52" fill="url(#mp6)"/><rect x="400" y="30" width="1" height="52" fill="url(#mp6)"/><rect x="399" y="30" width="1" height="52" fill="url(#mp6)"/><rect x="398" y="30" width="1" height="52" fill="url(#mp6)"/><rect x="397" y="30" width="1" height="52" fill="url(#mp5)"/><rect x="396" y="30" width="1" height="52" fill="url(#mp5)"/><rect x="395" y="30" width="1" height="52" fill="url(#mp5)"/><rect x="394" y="30" width="1" height="52" fill="url(#mp4)"/><rect x="393" y="30" width="1" height="52" fill="url(#mp4)"/><rect x="392" y="30" width="1" height="52" fill="url(#mp4)"/><rect x="391" y="30" width="1" height="52" fill="url(#mp4)"/><rect x="390" y="30" width="1" height="52" fill="url(#mp3)"/><rect x="389" y="30" width="1" height="52" fill="url(#mp3)"/><rect x="388" y="30" width="1" height="52" fill="url(#mp3)"/><rect x="387" y="30" width="1" height="52" fill="url(#mp3)"/><rect x="386" y="30" width="1" height="52" fill="url(#mp3)"/><rect x="385" y="30" width="1" height="52" fill="url(#mp2)"/><rect x="384" y="30" width="1" height="52" fill="url(#mp2)"/><rect x="383" y="30" width="1" height="52" fill="url(#mp2)"/><rect x="382" y="30" width="1" height="52" fill="url(#mp2)"/><rect x="381" y="30" width="1" height="52" fill="url(#mp2)"/><rect x="380" y="30" width="1" height="52" fill="url(#mp1)"/><rect x="379" y="30" width="1" height="52" fill="url(#mp1)"/></g><polygon points="231,55 379,55 380,81 230,81" fill="url(#mp1)" /><g fill="none" stroke="#00aa00" stroke-width="1"><polyline points="33.5,29.5 83.5,29.5 135.5,32.5 186.5,44.5 231.5,55.5 280.5,55.5 330.5,55.5 378.5,55.5 424.5,44.5 475.5,32.5 527.5,29.5 576.5,29.5"/><polyline points="33.5,54.5 83.5,54.5 131.5,57.5 178.5,71.5 230.5,80.5"/><polyline points="380.5,80.5 431.5,70.5 479.5,57.5 527.5,54.5 576.5,54.5"/><polyline points="32.5,79.5 82.5,80.5 131.5,81.5 230.5,80.5 280.5,81.5 329.5,81.5 380.5,80.5 478.5,81.5 527.5,80.5 576.5,79.5"/><polyline points="32.5,131.5 576.5,131.5"/><polyline points="32.5,181.5 576.5,181.5"/><polyline points="32.5,232.5 576.5,232.5"/><polyline points="32.5,283.5 576.5,283.5"/><polyline points="32.5,333.5 576.5,333.5"/><polyline points="32.5,384.5 576.5,384.5"/><polyline points="32.5,80.5 32.5,384.5"/><polyline points="82.5,80.5 82.5,384.5"/><polyline points="131.5,80.5 131.5,384.5"/><polyline points="180.5,80.5 180.5,384.5"/><polyline points="230.5,80.5 230.5,384.5"/><polyline points="280.5,80.5 280.5,384.5"/><polyline points="329.5,80.5 329.5,384.5"/><polyline points="379.5,80.5 379.5,384.5"/><polyline points="428.5,80.5 428.5,384.5"/><polyline points="478.5,80.5 478.5,384.5"/><polyline points="527.5,80.5 527.5,384.5"/><polyline points="576.5,80.5 576.5,384.5"/><polyline points="33.5,29.5 33.5,79.5"/><polyline points="83.5,29.5 82.5,80.5"/><polyline points="135.5,32.5 131.5,57.5 132.5,81.5"/><polyline points="186.5,44.5 178.5,71.5"/><polyline points="231.5,55.5 230.5,80.5"/><polyline points="280.5,55.5 280.5,81.5"/><polyline points="330.5,55.5 329.5,81.5"/><polyline points="378.5,55.5 380.5,80.5"/><polyline points="424.5,44.5 431.5,70.5"/><polyline points="475.5,32.5 479.5,57.5 478.5,81.5"/><polyline points="527.5,29.5 528.5,80.5"/><polyline points="576.5,29.5 576.5,79.5"/></g><g stroke="#000" stroke-width="1"><line x1="177.5" y1="334" x2="177.5" y2="561"/><line x1="229.5" y1="334" x2="229.5" y2="561"/><line x1="280.5" y1="334" x2="280.5" y2="561"/><line x1="328.5" y1="334" x2="328.5" y2="561"/><line x1="379.5" y1="334" x2="379.5" y2="561"/><line x1="431.5" y1="334" x2="431.5" y2="561"/><line x1="178.5" y1="71" x2="178.5" y2="80"/><line x1="431.5" y1="70" x2="431.5" y2="80"/></g><g fill="#ffff55"><rect x="33" y="28" width="2" height="2"/><rect x="83" y="28" width="2" height="2"/><rect x="135" y="31" width="2" height="2"/><rect x="186" y="43" width="2" height="2"/><rect x="231" y="54" width="2" height="2"/><rect x="280" y="54" width="2" height="2"/><rect x="330" y="54" width="2" height="2"/><rect x="378" y="54" width="2" height="2"/><rect x="424" y="43" width="2" height="2"/><rect x="475" y="31" width="2" height="2"/><rect x="527" y="28" width="2" height="2"/><rect x="576" y="28" width="2" height="2"/><rect x="33" y="53" width="2" height="2"/><rect x="83" y="53" width="2" height="2"/><rect x="131" y="56" width="2" height="2"/><rect x="178" y="70" width="2" height="2"/><rect x="431" y="69" width="2" height="2"/><rect x="479" y="56" width="2" height="2"/><rect x="527" y="53" width="2" height="2"/><rect x="576" y="53" width="2" height="2"/><rect x="32" y="130" width="2" height="2"/><rect x="82" y="130" width="2" height="2"/><rect x="131" y="130" width="2" height="2"/><rect x="180" y="130" width="2" height="2"/><rect x="230" y="130" width="2" height="2"/><rect x="280" y="130" width="2" height="2"/><rect x="329" y="130" width="2" height="2"/><rect x="379" y="130" width="2" height="2"/><rect x="428" y="130" width="2" height="2"/><rect x="478" y="130" width="2" height="2"/><rect x="527" y="130" width="2" height="2"/><rect x="576" y="130" width="2" height="2"/><rect x="32" y="180" width="2" height="2"/><rect x="82" y="180" width="2" height="2"/><rect x="131" y="180" width="2" height="2"/><rect x="180" y="180" width="2" height="2"/><rect x="230" y="180" width="2" height="2"/><rect x="280" y="180" width="2" height="2"/><rect x="329" y="180" width="2" height="2"/><rect x="379" y="180" width="2" height="2"/><rect x="428" y="180" width="2" height="2"/><rect x="478" y="180" width="2" height="2"/><rect x="527" y="180" width="2" height="2"/><rect x="576" y="180" width="2" height="2"/><rect x="32" y="231" width="2" height="2"/><rect x="82" y="231" width="2" height="2"/><rect x="131" y="231" width="2" height="2"/><rect x="180" y="231" width="2" height="2"/><rect x="230" y="231" width="2" height="2"/><rect x="280" y="231" width="2" height="2"/><rect x="329" y="231" width="2" height="2"/><rect x="379" y="231" width="2" height="2"/><rect x="428" y="231" width="2" height="2"/><rect x="478" y="231" width="2" height="2"/><rect x="527" y="231" width="2" height="2"/><rect x="576" y="231" width="2" height="2"/><rect x="32" y="282" width="2" height="2"/><rect x="82" y="282" width="2" height="2"/><rect x="131" y="282" width="2" height="2"/><rect x="180" y="282" width="2" height="2"/><rect x="230" y="282" width="2" height="2"/><rect x="280" y="282" width="2" height="2"/><rect x="329" y="282" width="2" height="2"/><rect x="379" y="282" width="2" height="2"/><rect x="428" y="282" width="2" height="2"/><rect x="478" y="282" width="2" height="2"/><rect x="527" y="282" width="2" height="2"/><rect x="576" y="282" width="2" height="2"/><rect x="32" y="332" width="2" height="2"/><rect x="82" y="332" width="2" height="2"/><rect x="131" y="332" width="2" height="2"/><rect x="180" y="332" width="2" height="2"/><rect x="230" y="332" width="2" height="2"/><rect x="280" y="332" width="2" height="2"/><rect x="329" y="332" width="2" height="2"/><rect x="379" y="332" width="2" height="2"/><rect x="428" y="332" width="2" height="2"/><rect x="478" y="332" width="2" height="2"/><rect x="527" y="332" width="2" height="2"/><rect x="576" y="332" width="2" height="2"/><rect x="32" y="383" width="2" height="2"/><rect x="82" y="383" width="2" height="2"/><rect x="131" y="383" width="2" height="2"/><rect x="180" y="383" width="2" height="2"/><rect x="230" y="383" width="2" height="2"/><rect x="280" y="383" width="2" height="2"/><rect x="329" y="383" width="2" height="2"/><rect x="379" y="383" width="2" height="2"/><rect x="428" y="383" width="2" height="2"/><rect x="478" y="383" width="2" height="2"/><rect x="527" y="383" width="2" height="2"/><rect x="576" y="383" width="2" height="2"/><rect x="32" y="78" width="2" height="2"/><rect x="82" y="79" width="2" height="2"/><rect x="131" y="80" width="2" height="2"/><rect x="180" y="79" width="2" height="2"/><rect x="230" y="79" width="2" height="2"/><rect x="280" y="80" width="2" height="2"/><rect x="329" y="80" width="2" height="2"/><rect x="379" y="79" width="2" height="2"/><rect x="428" y="79" width="2" height="2"/><rect x="478" y="80" width="2" height="2"/><rect x="527" y="79" width="2" height="2"/><rect x="576" y="78" width="2" height="2"/><rect x="177" y="561" width="2" height="2"/><rect x="229" y="561" width="2" height="2"/><rect x="280" y="560" width="2" height="2"/><rect x="328" y="560" width="2" height="2"/><rect x="379" y="560" width="2" height="2"/><rect x="431" y="560" width="2" height="2"/></g><rect x="32" y="68" width="1" height="10" fill="#0000aa"/><g fill="#fff"><rect x="81" y="285" width="1" height="24"/><rect x="180" y="335" width="1" height="26"/><rect x="427" y="360" width="1" height="25"/><rect x="526" y="309" width="1" height="25"/><rect x="279" y="57" width="1" height="14"/><rect x="328" y="70" width="1" height="11"/></g></svg>
</body></html>
